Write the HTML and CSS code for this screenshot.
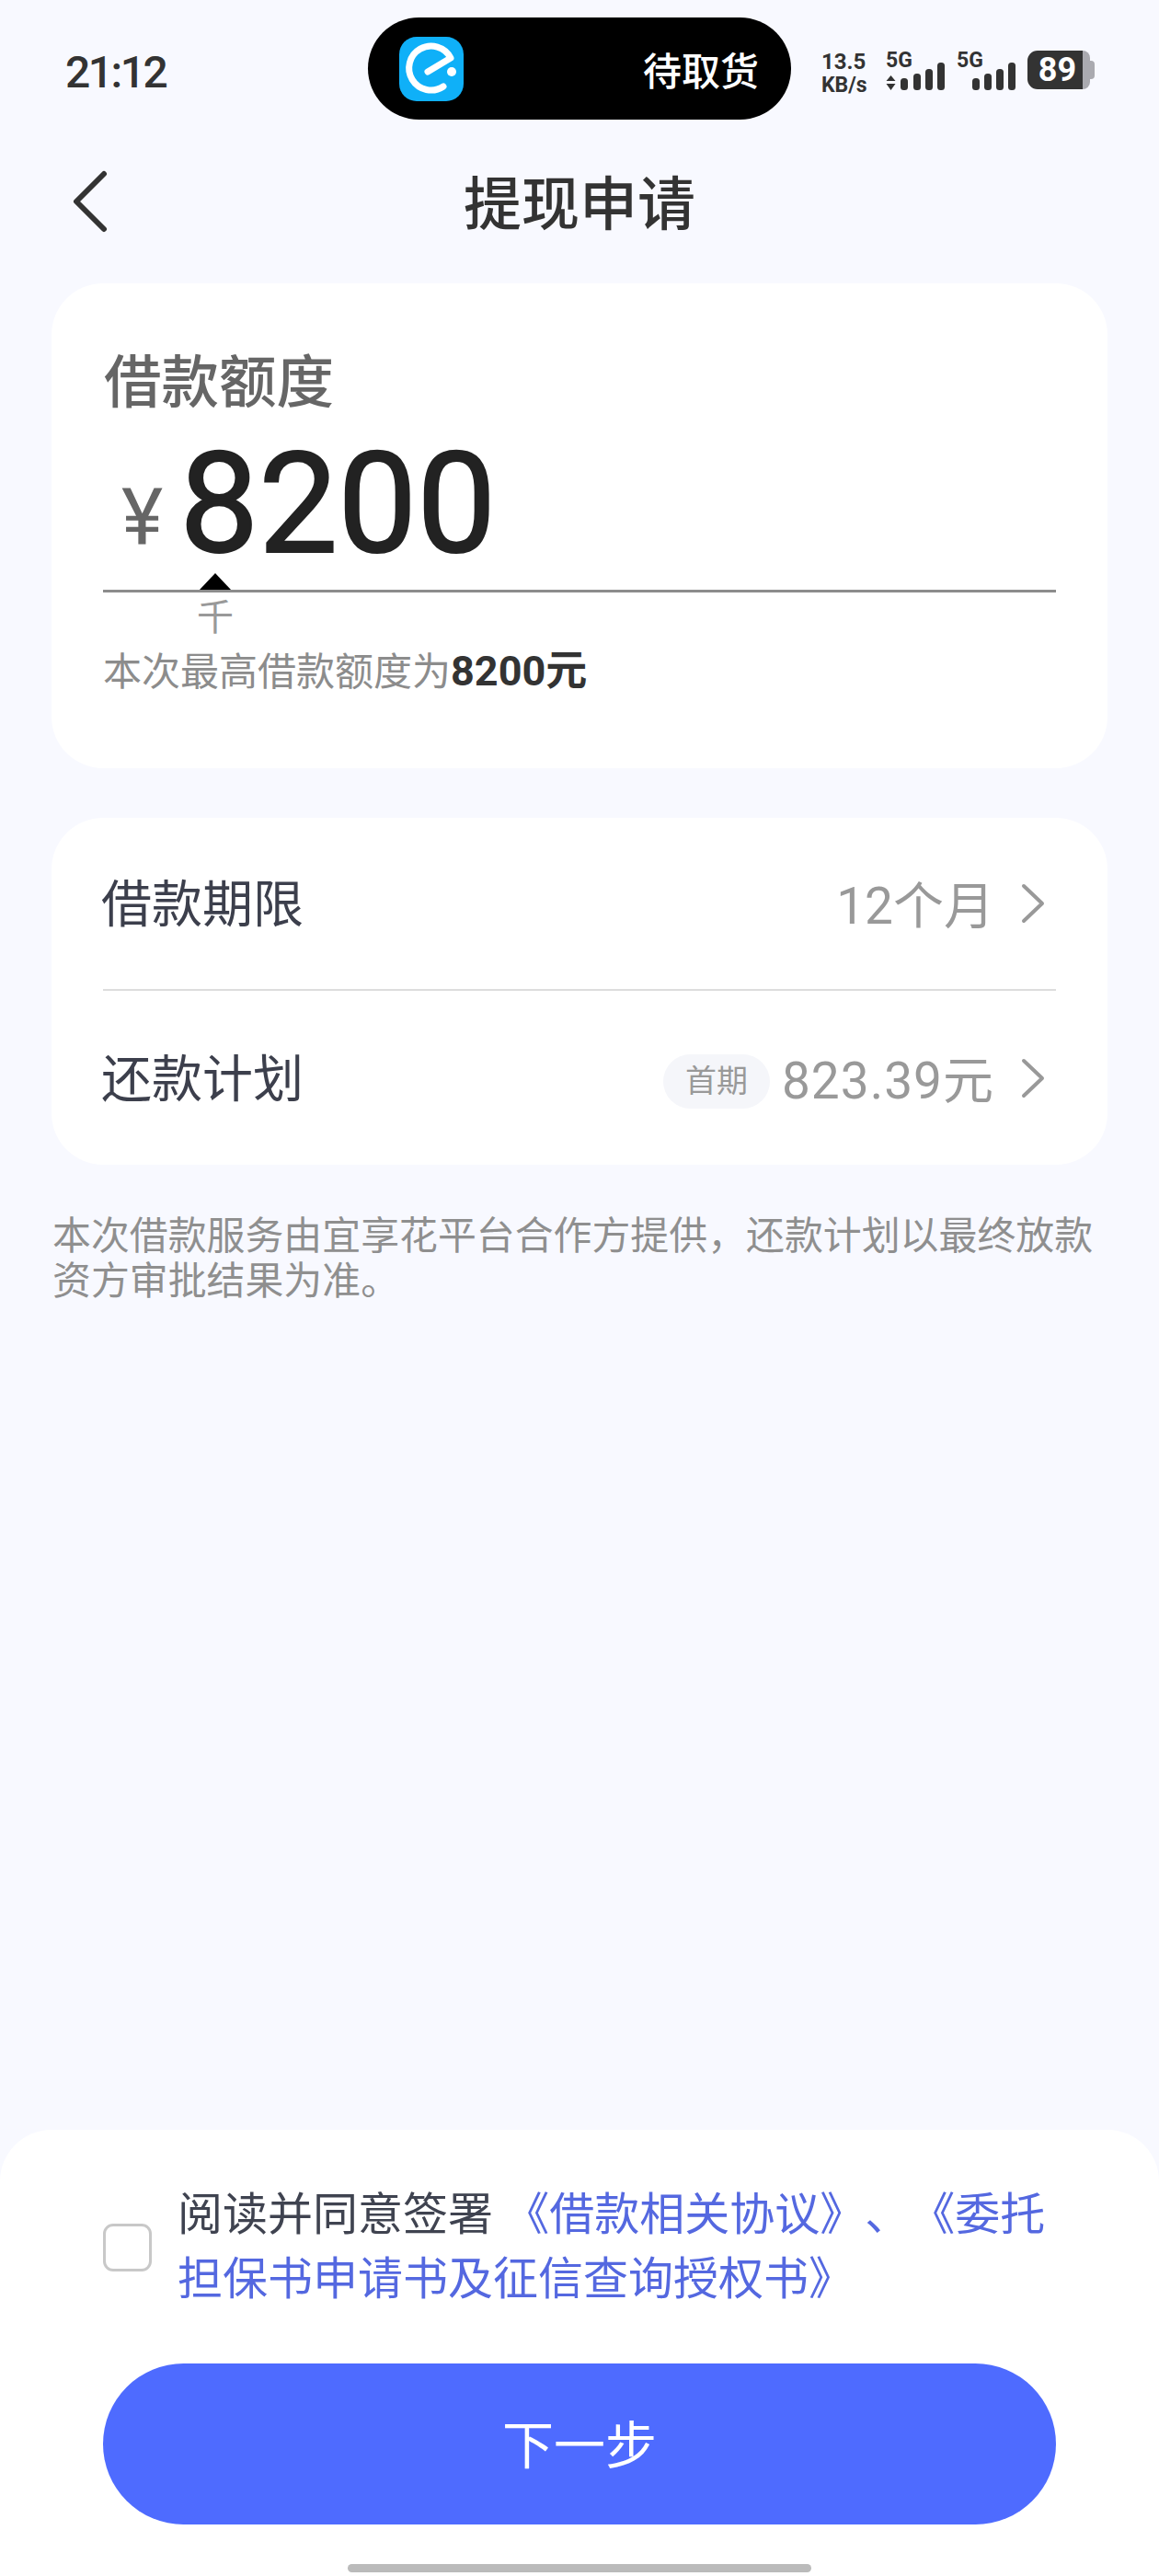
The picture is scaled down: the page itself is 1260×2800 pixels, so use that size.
FILE: index.html
```html
<!DOCTYPE html>
<html lang="zh-CN">

<head>
    <meta charset="UTF-8">
    <meta name="viewport" content="width=device-width, initial-scale=1.0">
    <title>提现申请</title>
    <link rel="stylesheet" href="styles.css">
</head>

<body>
    <div class="page">

        <div class="status-bar">
            <div class="time">21:12</div>
            <div class="island">
                <svg class="app-icon" viewBox="0 0 70 70">
                    <rect width="70" height="70" rx="19" fill="#0fb0f8" />
                    <path d="M31 38 L56 23 A24 24 0 1 0 48 54" fill="none" stroke="#fff" stroke-width="7" stroke-linecap="round" stroke-linejoin="round" />
                    <circle cx="57" cy="38" r="5" fill="#fff" />
                </svg>
                <span class="island-text">待取货</span>
            </div>
            <div class="indicators">
                <div class="speed"><span>13.5</span><span class="speed-unit">KB/s</span></div>
                <svg class="signal" width="64" height="44" viewBox="0 0 64 44">
                    <text x="0" y="17" class="signal-text">5G</text>
                    <path d="M5.500 26 L10.500 32 H0.500 Z M5.500 42 L0.500 35 H10.500 Z" fill="#333" />
                    <rect x="16" y="29" width="8" height="13" rx="3.500" fill="#333" />
                    <rect x="30" y="24" width="8" height="18" rx="3.500" fill="#333" />
                    <rect x="43" y="19" width="8" height="23" rx="3.500" fill="#333" />
                    <rect x="56" y="12" width="8" height="30" rx="3.500" fill="#333" />
                </svg>
                <svg class="signal signal-second" width="64" height="44" viewBox="0 0 64 44">
                    <text x="0" y="17" class="signal-text">5G</text>
                    <rect x="17" y="29" width="8" height="13" rx="3.500" fill="#333" />
                    <rect x="30" y="24" width="8" height="18" rx="3.500" fill="#333" />
                    <rect x="43" y="19" width="8" height="23" rx="3.500" fill="#333" />
                    <rect x="56" y="12" width="8" height="30" rx="3.500" fill="#333" />
                </svg>
                <div class="battery">
                    <div class="battery-level">89</div>
                    <div class="battery-rest"></div>
                    <div class="battery-tip"></div>
                </div>
            </div>
        </div>

        <div class="nav-bar">
            <svg class="back-icon" width="40" height="68" viewBox="0 0 40 68">
                <path d="M34 4 L4 34 L34 64" fill="none" stroke="#333" stroke-width="6" stroke-linecap="round" stroke-linejoin="round" />
            </svg>
            <div class="nav-title">提现申请</div>
        </div>

        <div class="card amount-card">
            <div class="amount-label">借款额度</div>
            <div class="amount-row"><span class="currency">¥</span><span class="amount">8200</span></div>
            <div class="scale-mark"></div>
            <div class="amount-line"></div>
            <div class="scale-label">千</div>
            <div class="amount-hint">本次最高借款额度为<b>8200元</b></div>
        </div>

        <div class="card info-card">
            <div class="info-row">
                <span class="info-label">借款期限</span>
                <span class="info-value">12个月</span>
                <svg class="chevron" width="26" height="44" viewBox="0 0 26 44">
                    <path d="M3 3 L23 22 L3 41" fill="none" stroke="#999" stroke-width="4" stroke-linecap="round" stroke-linejoin="round" />
                </svg>
            </div>
            <div class="info-divider"></div>
            <div class="info-row info-row-last">
                <span class="info-label">还款计划</span>
                <span class="first-tag">首期</span>
                <span class="info-value info-amount">823.39元</span>
                <svg class="chevron" width="26" height="44" viewBox="0 0 26 44">
                    <path d="M3 3 L23 22 L3 41" fill="none" stroke="#999" stroke-width="4" stroke-linecap="round" stroke-linejoin="round" />
                </svg>
            </div>
        </div>

        <div class="note">本次借款服务由宜享花平台合作方提供，还款计划以最终放款资方审批结果为准。</div>

        <div class="bottom-sheet">
            <div class="agree-row">
                <div class="checkbox"></div>
                <div class="agree-text">阅读并同意签署 <span class="agree-link">《借款相关协议》、《委托担保书申请书及征信查询授权书》</span></div>
            </div>
            <button class="next-btn">下一步</button>
            <div class="home-bar"></div>
        </div>

    </div>
</body>

</html>
```

FILE: styles.css
```css
* {
    box-sizing: border-box;
}

body {
    margin: 0;
    background-color: #f8f9ff;
    font-family: Roboto, "Noto Sans CJK SC", sans-serif;
    text-spacing-trim: space-all;
}

.page {
    display: flex;
    flex-direction: column;
    width: 1260px;
    height: 2800px;
    overflow: hidden;
}

/* status bar */
.status-bar {
    display: flex;
    align-items: flex-start;
    height: 130px;
    padding-top: 19px;
}

.time {
    width: 400px;
    padding-left: 71px;
    padding-top: 32px;
    font-size: 48px;
    line-height: 56px;
    font-weight: 500;
    letter-spacing: -2.500px;
    color: #333;
}

.island {
    display: flex;
    align-items: center;
    justify-content: space-between;
    width: 460px;
    height: 111px;
    padding: 0 35px 0 34px;
    border-radius: 56px;
    background: #000;
}

.app-icon {
    width: 70px;
    height: 70px;
}

.island-text {
    font-size: 42px;
    font-weight: 500;
    color: white;
}

.indicators {
    display: flex;
    align-items: flex-start;
    padding-left: 33px;
    padding-top: 36px;
    color: #333;
}

.speed {
    display: flex;
    flex-direction: column;
    width: 70px;
    font-size: 24px;
    line-height: 25px;
    font-weight: 700;
}

.speed-unit {
    font-size: 23px;
}

.signal {
    margin-top: 1px;
    overflow: visible;
}

.signal-second {
    margin-left: 13px;
}

.signal-text {
    font-family: Roboto, sans-serif;
    font-size: 23px;
    font-weight: 700;
    fill: #333;
}

.battery {
    display: flex;
    align-items: center;
    height: 42px;
    margin-left: 13px;
}

.battery-level {
    width: 60px;
    height: 42px;
    padding-left: 5px;
    border-radius: 11px 0 0 11px;
    background: #333;
    color: white;
    font-size: 36px;
    line-height: 42px;
    font-weight: 700;
    text-align: center;
}

.battery-rest {
    width: 8px;
    height: 42px;
    border-radius: 0 8px 8px 0;
    background: #aaaab0;
}

.battery-tip {
    width: 5px;
    height: 20px;
    border-radius: 0 4px 4px 0;
    background: #aaaab0;
}

/* nav */
.nav-bar {
    display: flex;
    align-items: center;
    position: relative;
    height: 178px;
    padding-left: 79px;
}

.nav-title {
    position: absolute;
    left: 0;
    right: 0;
    padding-bottom: 6px;
    text-align: center;
    font-size: 63px;
    font-weight: 500;
    color: #333;
}

/* cards */
.card {
    margin: 0 56px;
    border-radius: 56px;
    background: white;
}

.amount-card {
    height: 527px;
    padding: 72px 56px 0;
}

.amount-label {
    padding-left: 1px;
    font-size: 62.500px;
    line-height: 74px;
    color: #666;
    font-weight: 500;
}

.amount-row {
    height: 169px;
    padding-top: 19px;
    padding-left: 20px;
    line-height: 150px;
}

.currency {
    margin-right: 18px;
    font-size: 86px;
    color: #666;
    vertical-align: 9px;
}

.amount {
    font-size: 153px;
    -webkit-text-stroke: 2px #222;
    color: #222;
}

.scale-mark {
    width: 0;
    margin-left: 105px;
    border-left: 17px solid transparent;
    border-right: 17px solid transparent;
    border-bottom: 18px solid #000;
}

.amount-line {
    height: 3px;
    background: #8c8c8c;
}

.scale-label {
    width: 40px;
    margin-left: 102px;
    margin-top: 5px;
    font-size: 40px;
    line-height: 46px;
    text-align: center;
    color: #999;
}

.amount-hint {
    margin-top: 10px;
    font-size: 42px;
    line-height: 50px;
    color: #8c8c8c;
}

.amount-hint b {
    font-size: 45px;
    color: #333;
    font-weight: 700;
}

.info-card {
    height: 377px;
    margin-top: 54px;
    padding: 0 56px 0 54px;
}

.info-row {
    display: flex;
    align-items: center;
    height: 186px;
}

.info-row-last {
    height: 190px;
}

.info-label {
    margin-right: auto;
    margin-bottom: 8px;
    font-size: 55px;
    color: #3c3f4c;
}

.info-value {
    margin-bottom: 5px;
    font-size: 55px;
    color: #999;
}

.info-amount {
    letter-spacing: 1px;
}

.chevron {
    margin-left: 29px;
    margin-right: 12px;
}

.first-tag {
    width: 116px;
    height: 59px;
    margin-right: 13px;
    margin-top: 6px;
    border-radius: 30px;
    background: #f5f6fa;
    font-size: 34px;
    line-height: 59px;
    text-align: center;
    color: #999;
}

.info-divider {
    height: 2px;
    margin-left: 2px;
    background: #dddddd;
}

.note {
    margin: 53px 64px 0 57px;
    font-size: 41.900px;
    line-height: 49px;
    color: #8f8f8f;
}

/* bottom */
.bottom-sheet {
    display: flex;
    flex-direction: column;
    height: 485px;
    margin-top: auto;
    padding: 58px 112px 0;
    border-radius: 56px 56px 0 0;
    background: white;
}

.agree-row {
    display: flex;
    align-items: center;
    gap: 28px;
}

.checkbox {
    flex: none;
    width: 53px;
    height: 52px;
    border: 3px solid #c8c8c8;
    border-radius: 11px;
}

.agree-text {
    font-size: 49px;
    line-height: 70px;
    color: #3f4350;
}

.agree-link {
    color: #5468e0;
}

.next-btn {
    height: 175px;
    margin-top: 56px;
    padding-bottom: 8px;
    border: none;
    border-radius: 88px;
    background: #4e6bff;
    font-family: inherit;
    font-size: 56px;
    color: white;
}

.home-bar {
    width: 504px;
    height: 9px;
    margin: 43px auto 0;
    border-radius: 5px;
    background: #bbbbbb;
}
```
